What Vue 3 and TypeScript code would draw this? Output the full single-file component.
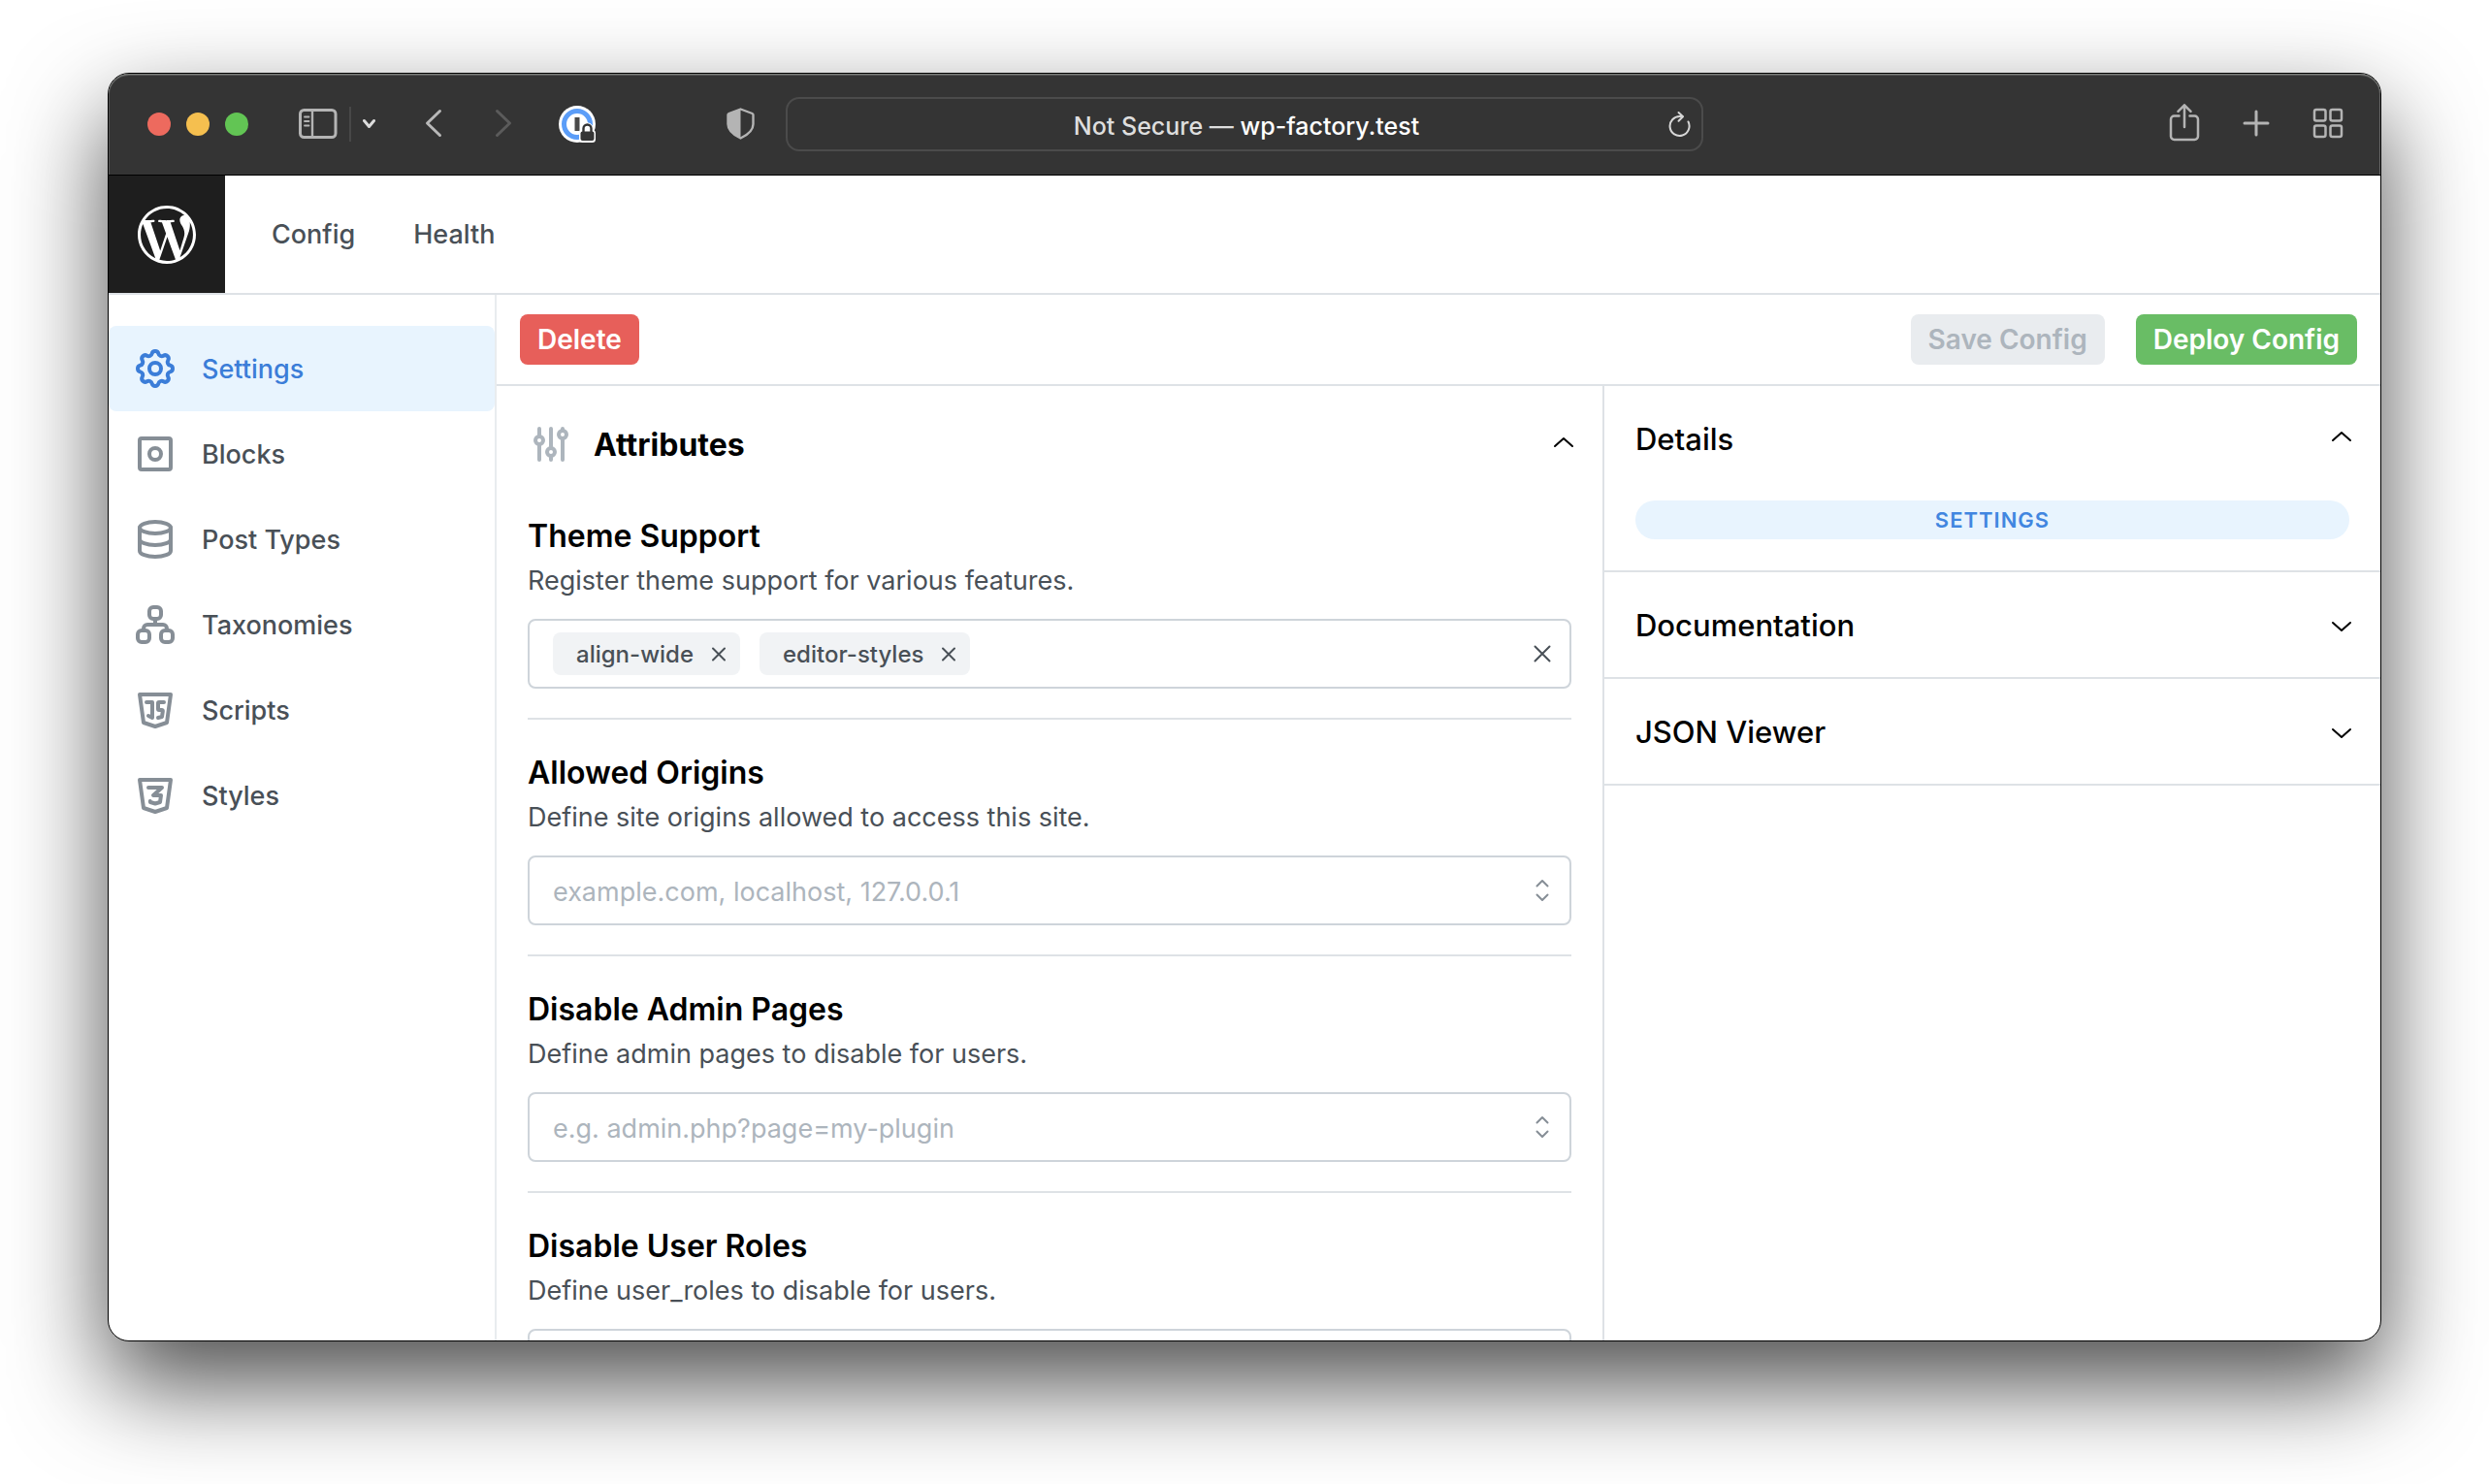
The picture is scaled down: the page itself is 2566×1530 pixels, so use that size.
<script setup lang="ts">
import { ref } from 'vue'

interface NavItem {
  label: string
  paths: string[]
}

interface Field {
  id: string
  title: string
  description: string
  placeholder: string
  tags: string[]
}

const gear =
  'M10.325 4.317c.426 -1.756 2.924 -1.756 3.35 0a1.724 1.724 0 0 0 2.573 1.066c1.543 -.94 3.31 .826 2.37 2.37a1.724 1.724 0 0 0 1.065 2.572c1.756 .426 1.756 2.924 0 3.35a1.724 1.724 0 0 0 -1.066 2.573c.94 1.543 -.826 3.31 -2.37 2.37a1.724 1.724 0 0 0 -2.572 1.065c-.426 1.756 -2.924 1.756 -3.35 0a1.724 1.724 0 0 0 -2.573 -1.066c-1.543 .94 -3.31 -.826 -2.37 -2.37a1.724 1.724 0 0 0 -1.065 -2.572c-1.756 -.426 -1.756 -2.924 0 -3.35a1.724 1.724 0 0 0 1.066 -2.573c-.94 -1.543 .826 -3.31 2.37 -2.37c1 .608 2.296 .07 2.572 -1.065z'
const ring = 'M9 12a3 3 0 1 0 6 0a3 3 0 1 0 -6 0'
const shield = 'M20 4l-2 14.5l-6 2l-6 -2l-2 -14.5z'

const navItems: NavItem[] = [
  { label: 'Settings', paths: [gear, ring] },
  {
    label: 'Blocks',
    paths: ['M5 4h14a1 1 0 0 1 1 1v14a1 1 0 0 1 -1 1h-14a1 1 0 0 1 -1 -1v-14a1 1 0 0 1 1 -1z', ring],
  },
  {
    label: 'Post Types',
    paths: [
      'M4 6a8 3 0 1 0 16 0a8 3 0 1 0 -16 0',
      'M4 6v6a8 3 0 0 0 16 0v-6',
      'M4 12v6a8 3 0 0 0 16 0v-6',
    ],
  },
  {
    label: 'Taxonomies',
    paths: [
      'M5 15h2a2 2 0 0 1 2 2v2a2 2 0 0 1 -2 2h-2a2 2 0 0 1 -2 -2v-2a2 2 0 0 1 2 -2z',
      'M17 15h2a2 2 0 0 1 2 2v2a2 2 0 0 1 -2 2h-2a2 2 0 0 1 -2 -2v-2a2 2 0 0 1 2 -2z',
      'M11 3h2a2 2 0 0 1 2 2v2a2 2 0 0 1 -2 2h-2a2 2 0 0 1 -2 -2v-2a2 2 0 0 1 2 -2z',
      'M6 15v-1a2 2 0 0 1 2 -2h8a2 2 0 0 1 2 2v1',
      'M12 9v3',
    ],
  },
  {
    label: 'Scripts',
    paths: [
      shield,
      'M7.5 8h3v8l-2 -1',
      'M16.5 8h-2.5a.5 .5 0 0 0 -.5 .5v3a.5 .5 0 0 0 .5 .5h1.423a.5 .5 0 0 1 .495 .57l-.418 2.93l-2 .5',
    ],
  },
  { label: 'Styles', paths: [shield, 'M8.5 8h7l-4.5 4h4l-.5 3.5l-2.5 .75l-2.5 -.75l-.1 -.5'] },
]

const active = ref('Settings')

const fields = ref<Field[]>([
  {
    id: 'theme-support',
    title: 'Theme Support',
    description: 'Register theme support for various features.',
    placeholder: '',
    tags: ['align-wide', 'editor-styles'],
  },
  {
    id: 'allowed-origins',
    title: 'Allowed Origins',
    description: 'Define site origins allowed to access this site.',
    placeholder: 'example.com, localhost, 127.0.0.1',
    tags: [],
  },
  {
    id: 'disable-admin-pages',
    title: 'Disable Admin Pages',
    description: 'Define admin pages to disable for users.',
    placeholder: 'e.g. admin.php?page=my-plugin',
    tags: [],
  },
  {
    id: 'disable-user-roles',
    title: 'Disable User Roles',
    description: 'Define user_roles to disable for users.',
    placeholder: '',
    tags: [],
  },
])

function removeTag(field: Field, tag: string) {
  field.tags = field.tags.filter((t) => t !== tag)
}

const panels = ref([
  { title: 'Details', open: true, badge: 'Settings' },
  { title: 'Documentation', open: false, badge: '' },
  { title: 'JSON Viewer', open: false, badge: '' },
])
</script>

<template>
  <div class="desktop">
    <div class="window">
      <header class="toolbar">
        <div class="tools-left">
          <div class="lights">
            <button class="light red" type="button" aria-label="Close window"></button>
            <button class="light yellow" type="button" aria-label="Minimize window"></button>
            <button class="light green" type="button" aria-label="Zoom window"></button>
          </div>
          <div class="sidebar-tools">
            <button type="button" aria-label="Show sidebar">
              <svg width="40" height="32" viewBox="0 0 40 32" fill="none" stroke="#b4b4b4" stroke-linecap="round">
                <rect x="1.5" y="1.5" width="36.5" height="28" rx="4" stroke-width="3" />
                <path d="M14 2v27" stroke-width="2.4" />
                <path d="M6 8.500h4.500M6 13h4.500M6 17.500h4.500" stroke-width="1.800" />
              </svg>
            </button>
            <span class="separator"></span>
            <button type="button" aria-label="Sidebar options">
              <svg width="14" height="12" viewBox="0 0 14 12" fill="none" stroke="#dcdcdc" stroke-width="3" stroke-linecap="round" stroke-linejoin="round">
                <path d="M1.500 2.500l5 6l5 -6" />
              </svg>
            </button>
          </div>
          <div class="history">
            <button type="button" aria-label="Back">
              <svg width="20" height="32" viewBox="0 0 20 32" fill="none" stroke="#b8b8b8" stroke-width="3" stroke-linecap="round" stroke-linejoin="round">
                <path d="M15.500 2.500l-13 12.500l13 12.500" />
              </svg>
            </button>
            <button type="button" aria-label="Forward">
              <svg width="20" height="32" viewBox="0 0 20 32" fill="none" stroke="#5b5b5b" stroke-width="3" stroke-linecap="round" stroke-linejoin="round">
                <path d="M2.500 2.500l13 12.500l-13 12.500" />
              </svg>
            </button>
          </div>
          <button type="button" aria-label="Password manager">
            <svg width="40" height="40" viewBox="0 0 40 40">
              <circle cx="19" cy="20" r="19" fill="#fff" />
              <circle cx="19" cy="20" r="13.500" fill="#fff" stroke="#5b9df8" stroke-width="5" />
              <rect x="16.500" y="13" width="5" height="14" fill="#4a4a4a" />
              <path d="M21 29.500a3 3 0 0 1 2 -3.500v-1.500a6 6 0 0 1 12.500 0v1.500a3 3 0 0 1 2.500 3v6.500a3.500 3.500 0 0 1 -3.500 3.500h-10a3.500 3.500 0 0 1 -3.500 -3.500z" fill="#fff" />
              <rect x="22.500" y="27.500" width="14" height="9.500" rx="2" fill="#343434" />
              <path d="M25.500 28v-3.500a4 4 0 0 1 8 0v3.500" fill="none" stroke="#343434" stroke-width="2.400" />
            </svg>
          </button>
          <button class="privacy" type="button" aria-label="Privacy report">
            <svg width="32" height="36" viewBox="0 0 32 36">
              <path d="M15.500 2.500l12 4.500q1 .4 1 1.500v9.500c0 6.500 -5.500 11 -13 14.500c-7.500 -3.500 -13 -8 -13 -14.500v-9.500q0 -1.100 1 -1.500z" fill="none" stroke="#b4b4b4" stroke-width="2.400" stroke-linejoin="round" />
              <path d="M15.500 2.500l-12 4.500q-1 .4 -1 1.500v9.500c0 6.500 5.500 11 13 14.500z" fill="#b4b4b4" />
            </svg>
          </button>
        </div>

        <div class="address">
          <p class="address-text">Not Secure — <span>wp-factory.test</span></p>
          <button class="reload" type="button" aria-label="Reload page">
            <svg width="24" height="28" viewBox="0 0 24 28" fill="none" stroke="#d6d6d6" stroke-width="2" stroke-linecap="round" stroke-linejoin="round">
              <path d="M20.500 11.500a10 10 0 1 1 -8.500 -5.500h2.500" />
              <path d="M10.500 2l4.500 4.200l-4.500 4.500" />
            </svg>
          </button>
        </div>

        <div class="tools-right">
          <button type="button" aria-label="Share">
            <svg width="32" height="40" viewBox="0 0 32 40" fill="none" stroke="#b4b4b4" stroke-width="2.500" stroke-linecap="round" stroke-linejoin="round">
              <path d="M10.500 12.500h-5a3.500 3.500 0 0 0 -3.500 3.500v17.500a3.500 3.500 0 0 0 3.500 3.500h21a3.500 3.500 0 0 0 3.500 -3.500v-17.500a3.500 3.500 0 0 0 -3.500 -3.500h-5" />
              <path d="M16 24v-22M9.500 7.800l6.500 -6.500l6.500 6.500" />
            </svg>
          </button>
          <button type="button" aria-label="New tab">
            <svg width="28" height="28" viewBox="0 0 28 28" fill="none" stroke="#b4b4b4" stroke-width="3" stroke-linecap="round">
              <path d="M14 2v24M2 14h24" />
            </svg>
          </button>
          <button type="button" aria-label="Tab overview">
            <svg width="32" height="32" viewBox="0 0 32 32" fill="none" stroke="#b4b4b4" stroke-width="2.500">
              <rect x="2" y="2" width="11.500" height="11.500" rx="2" />
              <rect x="18.500" y="2" width="11.500" height="11.500" rx="2" />
              <rect x="2" y="18.500" width="11.500" height="11.500" rx="2" />
              <rect x="18.500" y="18.500" width="11.500" height="11.500" rx="2" />
            </svg>
          </button>
        </div>
      </header>

      <div class="topbar">
        <a class="logo" href="#" aria-label="WordPress">
          <svg width="60" height="60" viewBox="0 0 24 24" fill="#fff" fill-rule="evenodd">
            <path d="M21.469 6.825c.84 1.537 1.318 3.3 1.318 5.175 0 3.979-2.156 7.456-5.363 9.325l3.295-9.527c.615-1.54.82-2.771.82-3.864 0-.405-.026-.78-.07-1.11m-7.981.105c.647-.03 1.232-.105 1.232-.105.582-.075.514-.93-.067-.899 0 0-1.755.135-2.88.135-1.064 0-2.85-.15-2.85-.15-.585-.03-.661.855-.075.885 0 0 .54.061 1.125.09l1.68 4.605-2.37 7.08L5.354 6.9c.649-.03 1.234-.1 1.234-.1.585-.075.516-.93-.065-.896 0 0-1.746.138-2.874.138-.2 0-.438-.008-.69-.015C4.911 3.15 8.235 1.215 12 1.215c2.809 0 5.365 1.072 7.286 2.833-.046-.003-.091-.009-.141-.009-1.06 0-1.812.923-1.812 1.914 0 .89.513 1.643 1.06 2.531.411.72.89 1.643.89 2.977 0 .915-.354 1.994-.821 3.479l-1.075 3.585-3.9-11.61.001.014zM12 22.784c-1.059 0-2.081-.153-3.048-.437l3.237-9.406 3.315 9.087c.024.053.05.101.078.149-1.12.393-2.325.609-3.582.609M1.211 12c0-1.564.336-3.05.935-4.39L7.29 21.709C3.694 19.96 1.212 16.271 1.211 12M12 0C5.385 0 0 5.385 0 12s5.385 12 12 12 12-5.385 12-12S18.615 0 12 0" />
          </svg>
        </a>
        <nav class="primary">
          <a href="#config">Config</a>
          <a href="#health">Health</a>
        </nav>
      </div>

      <div class="body">
        <nav class="sidebar">
          <a
            v-for="item in navItems"
            :key="item.label"
            href="#"
            class="nav-item"
            :class="{ active: item.label === active }"
            @click.prevent="active = item.label"
          >
            <svg class="icon" viewBox="0 0 24 24">
              <path v-for="d in item.paths" :key="d" :d="d" />
            </svg>
            {{ item.label }}
          </a>
        </nav>

        <div class="workspace">
          <div class="actions">
            <button class="btn danger" type="button">Delete</button>
            <div class="actions-end">
              <button class="btn" type="button" disabled>Save Config</button>
              <button class="btn success" type="button">Deploy Config</button>
            </div>
          </div>

          <div class="columns">
            <main class="editor">
              <div class="editor-head">
                <svg class="icon sliders" viewBox="0 0 24 24">
                  <circle cx="6" cy="10" r="2" />
                  <path d="M6 4v4M6 12v8" />
                  <circle cx="12" cy="16" r="2" />
                  <path d="M12 4v10M12 18v2" />
                  <circle cx="18" cy="7" r="2" />
                  <path d="M18 4v1M18 9v11" />
                </svg>
                <h1>Attributes</h1>
                <button class="toggle" type="button" aria-label="Collapse attributes">
                  <svg class="chevron" viewBox="0 0 36 36"><path d="M9 20l9 -8l9 8" /></svg>
                </button>
              </div>

              <section v-for="field in fields" :key="field.id" class="field">
                <label :for="field.id">{{ field.title }}</label>
                <p>{{ field.description }}</p>
                <div class="control">
                  <span v-for="tag in field.tags" :key="tag" class="tag">
                    {{ tag }}
                    <button type="button" :aria-label="`Remove ${tag}`" @click="removeTag(field, tag)">
                      <svg width="16" height="16" viewBox="0 0 16 16"><path d="M2 2.500l12 12M14 2.500l-12 12" /></svg>
                    </button>
                  </span>
                  <input :id="field.id" type="text" :placeholder="field.placeholder" />
                  <button v-if="field.tags.length" class="end" type="button" aria-label="Clear all" @click="field.tags = []">
                    <svg class="clear" viewBox="0 0 36 36"><path d="M10.500 10.500l15 15M25.500 10.500l-15 15" /></svg>
                  </button>
                  <svg v-else class="selector" viewBox="0 0 36 36">
                    <path d="M12.500 13.500l5.500 -5.500l5.500 5.500M12.500 22.500l5.500 5.500l5.500 -5.500" />
                  </svg>
                </div>
              </section>
            </main>

            <aside class="inspector">
              <section v-for="panel in panels" :key="panel.title" class="panel">
                <h2>
                  <button type="button" :aria-expanded="panel.open" @click="panel.open = !panel.open">
                    <span>{{ panel.title }}</span>
                    <svg class="chevron" viewBox="0 0 36 36">
                      <path :d="panel.open ? 'M9 20l9 -8l9 8' : 'M9 16l9 8l9 -8'" />
                    </svg>
                  </button>
                </h2>
                <div v-if="panel.open && panel.badge" class="panel-body">
                  <span class="badge">{{ panel.badge }}</span>
                </div>
              </section>
            </aside>
          </div>
        </div>
      </div>
    </div>
  </div>
</template>

<style>
body {
  margin: 0;
  background: #fff;
}
</style>

<style scoped>
.desktop {
  box-sizing: border-box;
  display: flex;
  flex-direction: column;
  height: 100vh;
  padding: 75px 111px 147px;
  overflow: hidden;
  font-family: Inter, 'Liberation Sans', sans-serif;
  font-size: 27px;
  color: #495057;
}

.desktop * {
  box-sizing: border-box;
}

button {
  display: flex;
  align-items: center;
  padding: 0;
  border: 0;
  background: none;
  color: inherit;
  font: inherit;
}

svg {
  display: block;
  flex: none;
}

a {
  color: inherit;
  text-decoration: none;
}

.window {
  display: flex;
  flex: 1;
  flex-direction: column;
  min-height: 0;
  overflow: hidden;
  border: 1px solid #000;
  border-radius: 22px;
  background: #fff;
  box-shadow: 0 44px 100px rgba(0, 0, 0, 0.7);
}

/* Browser toolbar */
.toolbar {
  display: grid;
  flex: none;
  grid-template-columns: 1fr minmax(0, 946px) 1fr;
  align-items: center;
  height: 105px;
  border-bottom: 1px solid #000;
  border-radius: 21px 21px 0 0;
  background: #343434;
  box-shadow: inset 0 1px 0 #7b7d7a, inset 0 2px 0 #565756, inset 1px 0 0 #555, inset -1px 0 0 #666;
}

.tools-left,
.tools-right,
.lights,
.sidebar-tools,
.history {
  display: flex;
  align-items: center;
}

.tools-left {
  padding: 0 30px 0 40px;
}

.lights {
  gap: 16px;
  margin-right: 52px;
}

.light {
  width: 24px;
  height: 24px;
  border-radius: 50%;
}

.red {
  background: #ed6a5e;
}

.yellow {
  background: #f5bf4f;
}

.green {
  background: #62c554;
}

.sidebar-tools {
  gap: 12px;
  margin-right: 50px;
}

.separator {
  width: 2px;
  height: 36px;
  background: #484848;
}

.history {
  gap: 52px;
  margin-right: 46px;
}

.privacy {
  margin-left: auto;
}

.address {
  display: grid;
  grid-template-columns: 1fr auto 1fr;
  align-items: center;
  height: 56px;
  padding: 0 10px;
  border: 2px solid #4b4b4b;
  border-radius: 14px;
}

.address-text {
  grid-column: 2;
  margin: 0;
  padding: 4px 0 0 4px;
  color: #dedede;
  font-size: 25px;
  font-weight: 500;
  line-height: 36px;
  white-space: nowrap;
}

.address-text span {
  color: #fff;
}

.reload {
  justify-self: end;
}

.tools-right {
  gap: 44px;
  justify-content: flex-end;
  padding: 0 38px 2px 0;
}

/* Application header */
.topbar {
  display: flex;
  flex: none;
  height: 123px;
  border-bottom: 2px solid #dee2e6;
}

.logo {
  display: flex;
  align-items: center;
  justify-content: center;
  width: 120px;
  background: #1e1e1e;
}

.primary {
  display: flex;
  gap: 60px;
  align-items: center;
  margin-left: 48px;
  font-weight: 500;
}

.body {
  display: flex;
  flex: 1;
  min-height: 0;
}

/* Side navigation */
.sidebar {
  flex: none;
  width: 400px;
  padding-top: 32px;
  border-right: 2px solid #e9ecef;
}

.nav-item {
  display: flex;
  gap: 24px;
  align-items: center;
  height: 88px;
  padding: 0 24px;
  border-radius: 8px;
  font-weight: 500;
}

.nav-item.active {
  background: #e8f4fe;
  color: #3b7dd8;
}

.icon {
  width: 48px;
  height: 48px;
  fill: none;
  stroke: #868e96;
  stroke-linecap: round;
  stroke-linejoin: round;
  stroke-width: 2;
}

.active .icon {
  stroke: #3b7dd8;
}

/* Workspace */
.workspace {
  display: flex;
  flex: 1;
  flex-direction: column;
  min-width: 0;
}

.actions {
  display: flex;
  flex: none;
  align-items: center;
  justify-content: space-between;
  height: 94px;
  padding: 0 24px;
  border-bottom: 2px solid #dee2e6;
}

.actions-end {
  display: flex;
  gap: 32px;
}

.btn {
  height: 52px;
  padding: 0 18px;
  border-radius: 8px;
  color: #fff;
  font-size: 28px;
  font-weight: 600;
}

.btn:disabled {
  background: #e9ecef;
  color: #adb5bd;
}

.danger {
  background: #e75f5a;
}

.success {
  background: #69bd65;
}

.columns {
  display: flex;
  flex: 1;
  min-height: 0;
}

.editor {
  flex: 1;
  min-width: 0;
  padding: 0 32px;
  overflow: hidden;
}

.editor-head {
  display: flex;
  align-items: center;
  height: 120px;
  margin-bottom: 11px;
}

.sliders {
  stroke: #adb5bd;
}

h1,
h2 {
  margin: 0;
  color: #000;
  line-height: 48px;
}

h1 {
  flex: 1;
  margin-left: 20px;
  padding-top: 2px;
  font-size: 32px;
  font-weight: 700;
}

.toggle {
  margin-right: -10px;
}

.chevron,
.clear,
.selector {
  width: 36px;
  height: 36px;
  fill: none;
  stroke: #000;
  stroke-linecap: round;
  stroke-linejoin: round;
  stroke-width: 2;
}

.clear {
  stroke: #495057;
}

.selector {
  stroke: #868e96;
}

.field {
  margin-bottom: 31px;
  padding-bottom: 30px;
  border-bottom: 2px solid #dee2e6;
}

.field label {
  display: block;
  color: #000;
  font-size: 32px;
  font-weight: 600;
  line-height: 48px;
}

.field p {
  margin: 0 0 17px;
  line-height: 44px;
}

.control {
  display: flex;
  gap: 20px;
  align-items: center;
  height: 72px;
  padding: 0 10px 0 24px;
  border: 2px solid #ced4da;
  border-radius: 8px;
}

.tag {
  display: flex;
  gap: 18px;
  align-items: center;
  height: 44px;
  padding: 0 14px 0 24px;
  border-radius: 8px;
  background: #f1f3f5;
  font-size: 24px;
  font-weight: 500;
}

.tag svg {
  fill: none;
  stroke: #495057;
  stroke-linecap: round;
  stroke-width: 2;
}

.control input {
  flex: 1;
  min-width: 0;
  height: 44px;
  padding: 2px 0 0;
  border: 0;
  outline: 0;
  background: none;
  color: #000;
  font: inherit;
}

.control input::placeholder {
  color: #adb5bd;
  opacity: 1;
}

/* Inspector */
.inspector {
  flex: none;
  width: 802px;
  border-left: 2px solid #dee2e6;
}

.panel {
  border-bottom: 2px solid #dee2e6;
}

h2 {
  font-size: 31px;
  font-weight: 500;
}

h2 button {
  justify-content: space-between;
  width: 100%;
  height: 108px;
  padding: 0 22px 0 32px;
}

h2 span {
  padding-top: 2px;
}

.panel-body {
  padding: 10px 32px 32px;
}

.badge {
  display: block;
  height: 40px;
  border-radius: 20px;
  background: #e8f4fe;
  color: #4186e0;
  font-size: 22px;
  font-weight: 600;
  letter-spacing: 1px;
  line-height: 40px;
  text-align: center;
  text-transform: uppercase;
}
</style>
